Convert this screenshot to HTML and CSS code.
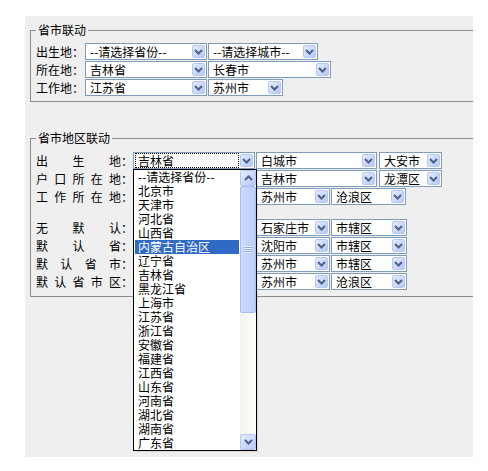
FILE: index.html
```html
<!DOCTYPE html>
<html lang="zh-CN">
<head>
<meta charset="utf-8">
<title>省市联动</title>
<link rel="stylesheet" href="styles.css">
</head>
<body>
<div class="panel">
  <fieldset class="group g1">
    <legend>省市联动</legend>
    <div class="row">
      <span class="lbl">出生地：</span>
      <span class="sel w122"><span class="val">--请选择省份--</span><span class="btn"><svg viewBox="0 0 9 6" width="9" height="6"><path d="M1 1l3.5 3.5L8 1" /></svg></span></span>
      <span class="sel w110 gap1"><span class="val">--请选择城市--</span><span class="btn"><svg viewBox="0 0 9 6" width="9" height="6"><path d="M1 1l3.5 3.5L8 1" /></svg></span></span>
    </div>
    <div class="row">
      <span class="lbl">所在地：</span>
      <span class="sel w122"><span class="val">吉林省</span><span class="btn"><svg viewBox="0 0 9 6" width="9" height="6"><path d="M1 1l3.5 3.5L8 1" /></svg></span></span>
      <span class="sel w123 gap1"><span class="val">长春市</span><span class="btn"><svg viewBox="0 0 9 6" width="9" height="6"><path d="M1 1l3.5 3.5L8 1" /></svg></span></span>
    </div>
    <div class="row">
      <span class="lbl">工作地：</span>
      <span class="sel w122"><span class="val">江苏省</span><span class="btn"><svg viewBox="0 0 9 6" width="9" height="6"><path d="M1 1l3.5 3.5L8 1" /></svg></span></span>
      <span class="sel w75 gap1"><span class="val">苏州市</span><span class="btn"><svg viewBox="0 0 9 6" width="9" height="6"><path d="M1 1l3.5 3.5L8 1" /></svg></span></span>
    </div>
  </fieldset>

  <fieldset class="group g2">
    <legend>省市地区联动</legend>
    <div class="row">
      <span class="lbl wide"><span class="chars"><i>出</i><i>生</i><i>地</i></span><span class="colon">：</span></span>
      <span class="sel w122 open">
        <span class="val focused"><span class="focus">吉林省</span></span><span class="btn"><svg viewBox="0 0 9 6" width="9" height="6"><path d="M1 1l3.5 3.5L8 1" /></svg></span>
        <div class="list">
          <ul class="items">
            <li>--请选择省份--</li>
            <li>北京市</li>
            <li>天津市</li>
            <li>河北省</li>
            <li>山西省</li>
            <li class="hl">内蒙古自治区</li>
            <li>辽宁省</li>
            <li>吉林省</li>
            <li>黑龙江省</li>
            <li>上海市</li>
            <li>江苏省</li>
            <li>浙江省</li>
            <li>安徽省</li>
            <li>福建省</li>
            <li>江西省</li>
            <li>山东省</li>
            <li>河南省</li>
            <li>湖北省</li>
            <li>湖南省</li>
            <li>广东省</li>
          </ul>
          <div class="sb">
            <span class="sb-btn"><svg viewBox="0 0 9 6" width="9" height="6"><path d="M1 5l3.5-3.5L8 5" /></svg></span>
            <span class="thumb"><span class="grip"></span></span>
            <span class="track"></span>
            <span class="sb-btn"><svg viewBox="0 0 9 6" width="9" height="6"><path d="M1 1l3.5 3.5L8 1" /></svg></span>
          </div>
        </div>
      </span>
      <span class="sel w121 gap1"><span class="val">白城市</span><span class="btn"><svg viewBox="0 0 9 6" width="9" height="6"><path d="M1 1l3.5 3.5L8 1" /></svg></span></span>
      <span class="sel w63 gap2"><span class="val">大安市</span><span class="btn"><svg viewBox="0 0 9 6" width="9" height="6"><path d="M1 1l3.5 3.5L8 1" /></svg></span></span>
    </div>
    <div class="row">
      <span class="lbl wide"><span class="chars"><i>户</i><i>口</i><i>所</i><i>在</i><i>地</i></span><span class="colon">：</span></span>
      <span class="sel w122"><span class="val"></span><span class="btn"></span></span>
      <span class="sel w121 gap1"><span class="val">吉林市</span><span class="btn"><svg viewBox="0 0 9 6" width="9" height="6"><path d="M1 1l3.5 3.5L8 1" /></svg></span></span>
      <span class="sel w63 gap2"><span class="val">龙潭区</span><span class="btn"><svg viewBox="0 0 9 6" width="9" height="6"><path d="M1 1l3.5 3.5L8 1" /></svg></span></span>
    </div>
    <div class="row">
      <span class="lbl wide"><span class="chars"><i>工</i><i>作</i><i>所</i><i>在</i><i>地</i></span><span class="colon">：</span></span>
      <span class="sel w122"><span class="val"></span><span class="btn"></span></span>
      <span class="sel w74 gap1"><span class="val">苏州市</span><span class="btn"><svg viewBox="0 0 9 6" width="9" height="6"><path d="M1 1l3.5 3.5L8 1" /></svg></span></span>
      <span class="sel w75 gap1"><span class="val">沧浪区</span><span class="btn"><svg viewBox="0 0 9 6" width="9" height="6"><path d="M1 1l3.5 3.5L8 1" /></svg></span></span>
    </div>

    <div class="spacer"></div>

    <div class="row">
      <span class="lbl wide"><span class="chars"><i>无</i><i>默</i><i>认</i></span><span class="colon">：</span></span>
      <span class="sel w122"><span class="val"></span><span class="btn"></span></span>
      <span class="sel w74 gap1"><span class="val">石家庄市</span><span class="btn"><svg viewBox="0 0 9 6" width="9" height="6"><path d="M1 1l3.5 3.5L8 1" /></svg></span></span>
      <span class="sel w76 gap1"><span class="val">市辖区</span><span class="btn"><svg viewBox="0 0 9 6" width="9" height="6"><path d="M1 1l3.5 3.5L8 1" /></svg></span></span>
    </div>
    <div class="row">
      <span class="lbl wide"><span class="chars"><i>默</i><i>认</i><i>省</i></span><span class="colon">：</span></span>
      <span class="sel w122"><span class="val"></span><span class="btn"></span></span>
      <span class="sel w74 gap1"><span class="val">沈阳市</span><span class="btn"><svg viewBox="0 0 9 6" width="9" height="6"><path d="M1 1l3.5 3.5L8 1" /></svg></span></span>
      <span class="sel w76 gap1"><span class="val">市辖区</span><span class="btn"><svg viewBox="0 0 9 6" width="9" height="6"><path d="M1 1l3.5 3.5L8 1" /></svg></span></span>
    </div>
    <div class="row">
      <span class="lbl wide"><span class="chars"><i>默</i><i>认</i><i>省</i><i>市</i></span><span class="colon">：</span></span>
      <span class="sel w122"><span class="val"></span><span class="btn"></span></span>
      <span class="sel w74 gap1"><span class="val">苏州市</span><span class="btn"><svg viewBox="0 0 9 6" width="9" height="6"><path d="M1 1l3.5 3.5L8 1" /></svg></span></span>
      <span class="sel w76 gap1"><span class="val">市辖区</span><span class="btn"><svg viewBox="0 0 9 6" width="9" height="6"><path d="M1 1l3.5 3.5L8 1" /></svg></span></span>
    </div>
    <div class="row">
      <span class="lbl wide"><span class="chars"><i>默</i><i>认</i><i>省</i><i>市</i><i>区</i></span><span class="colon">：</span></span>
      <span class="sel w122"><span class="val"></span><span class="btn"></span></span>
      <span class="sel w74 gap1"><span class="val">苏州市</span><span class="btn"><svg viewBox="0 0 9 6" width="9" height="6"><path d="M1 1l3.5 3.5L8 1" /></svg></span></span>
      <span class="sel w76 gap1"><span class="val">沧浪区</span><span class="btn"><svg viewBox="0 0 9 6" width="9" height="6"><path d="M1 1l3.5 3.5L8 1" /></svg></span></span>
    </div>
  </fieldset>
</div>
</body>
</html>
```

FILE: styles.css
```css
* { box-sizing: border-box; }

body {
  margin: 0;
  background: #fff;
  font-family: "Noto Sans CJK SC", "Noto Sans", sans-serif;
  font-size: 12px;
  color: #000;
}

.panel {
  margin: 16px 0 0 25px;
  width: 448px;
  height: 441px;
  padding: 7px 0 0 5px;
  background: #efefef;
  overflow: hidden;
}

/* grouping frames, open on the right side */
.group {
  margin: 0;
  border: 1px solid #8e8e8e;
  border-right: none;
  padding: 6px 0 4px 5px;
  min-width: 0;
}

.group legend {
  padding: 0 2px;
  line-height: 14px;
  height: 14px;
}

.g2 {
  margin-top: 29px;
  padding-top: 7px;
  padding-bottom: 5px;
}

.row {
  display: flex;
  align-items: center;
  height: 17px;
  margin-bottom: 1px;
}

.spacer { height: 13px; }

.lbl {
  width: 49px;
  flex: none;
  line-height: 17px;
  white-space: nowrap;
}

.lbl.wide {
  width: 97px;
  display: flex;
}

.lbl .chars {
  width: 85px;
  display: flex;
  justify-content: space-between;
}

.lbl i { font-style: normal; }

.lbl .colon { width: 12px; }

/* combobox */
.sel {
  position: relative;
  flex: none;
  display: flex;
  align-items: center;
  height: 17px;
  border: 1px solid #7f9db9;
  background: #fff;
}

.sel .val {
  flex: 1;
  min-width: 0;
  padding-left: 4px;
  line-height: 15px;
  white-space: nowrap;
  overflow: hidden;
}

.sel .val.focused {
  overflow: visible;
  padding-left: 2px;
}

.sel .focus {
  display: block;
  margin-right: 2px;
  padding-left: 2px;
  line-height: 13px;
  outline: 1px dotted #000;
}

.btn, .sb-btn {
  flex: none;
  display: flex;
  align-items: center;
  justify-content: center;
  width: 13px;
  height: 13px;
  margin-right: 1px;
  border: 1px solid #b7c8f2;
  border-radius: 2px;
  background: linear-gradient(135deg, #e4ecfe 0%, #c8d7fb 60%, #b5c8f6 100%);
}

.btn svg path, .sb-btn svg path {
  fill: none;
  stroke: #4d6185;
  stroke-width: 2;
}

.w63 { width: 63px; }
.w74 { width: 74px; }
.w75 { width: 75px; }
.w76 { width: 76px; }
.w110 { width: 110px; }
.w121 { width: 121px; }
.w122 { width: 122px; }
.w123 { width: 123px; }

.gap1 { margin-left: 1px; }
.gap2 { margin-left: 2px; }

/* open dropdown list */
.list {
  position: absolute;
  left: -1px;
  top: 16px;
  z-index: 5;
  width: 124px;
  height: 282px;
  display: flex;
  border: 1px solid #000;
  background: #fff;
  box-shadow: 1px 1px 1px rgba(0, 0, 0, 0.08);
}

.items {
  list-style: none;
  margin: 0;
  padding: 0;
  flex: 1;
}

.items li {
  height: 14px;
  line-height: 14px;
  padding-left: 3px;
  margin: 0 1px;
  white-space: nowrap;
}

.items li.hl {
  background: #316ac5;
  color: #fff;
}

.sb {
  width: 16px;
  display: flex;
  flex-direction: column;
  background: linear-gradient(90deg, #f3f3ef, #fdfdfb);
}

.sb .sb-btn {
  width: 16px;
  height: 16px;
  margin: 0;
}

.thumb {
  height: 127px;
  display: flex;
  align-items: center;
  justify-content: center;
  border: 1px solid #a9bff0;
  border-radius: 2px;
  background: linear-gradient(90deg, #cbd9fc, #bccff8);
}

.grip {
  width: 7px;
  height: 7px;
  background: repeating-linear-gradient(180deg, #eef3fe 0 1px, #8fa9e8 1px 2px);
}

.track { flex: 1; }
```
